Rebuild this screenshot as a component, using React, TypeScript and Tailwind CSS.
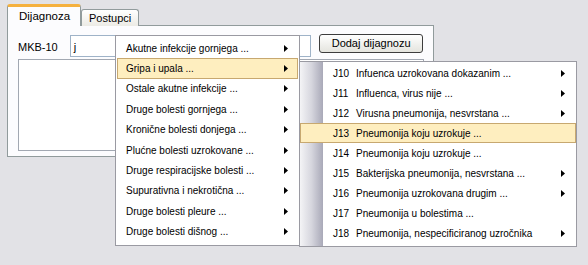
import React from "react";

const groups = [
  "Akutne infekcije gornjega ...",
  "Gripa i upala ...",
  "Ostale akutne infekcije ...",
  "Druge bolesti gornjega ...",
  "Kronične bolesti donjega ...",
  "Plućne bolesti uzrokovane ...",
  "Druge respiracijske bolesti ...",
  "Supurativna i nekrotična ...",
  "Druge bolesti pleure ...",
  "Druge bolesti dišnog ...",
];

const codes = [
  { code: "J10", name: "Infuenca uzrokovana dokazanim ...", sub: true },
  { code: "J11", name: "Influenca, virus nije ...", sub: true },
  { code: "J12", name: "Virusna pneumonija, nesvrstana ...", sub: true },
  { code: "J13", name: "Pneumonija koju uzrokuje ...", sub: false },
  { code: "J14", name: "Pneumonija koju uzrokuje ...", sub: false },
  { code: "J15", name: "Bakterijska pneumonija, nesvrstana ...", sub: true },
  { code: "J16", name: "Pneumonija uzrokovana drugim ...", sub: true },
  { code: "J17", name: "Pneumonija u bolestima ...", sub: false },
  { code: "J18", name: "Pneumonija, nespecificiranog uzročnika", sub: true },
];

function Arrow() {
  return (
    <svg width="4" height="7" viewBox="0 0 4 7" className="shrink-0">
      <polygon points="0,0 4,3.5 0,7" fill="#000" />
    </svg>
  );
}

export default function App() {
  return (
    <div className="relative w-[588px] h-[265px] overflow-hidden bg-[#e2e2e6] font-['Liberation_Sans',Arial,sans-serif] text-black">
      <div className="pl-[7px] pt-[4px]">
        {/* tabs */}
        <div className="relative z-10 -mb-px flex items-end">
          <div className="flex h-[22px] w-[74px] items-center rounded-t-[3px] border-x border-t-[3px] border-x-[#919b9c] border-t-[#f5b13f] bg-[#fcfcfe] pl-[11px] pt-[1px] text-[11.5px]">
            Dijagnoza
          </div>
          <div className="flex h-[17px] w-[58px] items-center rounded-t-[3px] border-x border-t border-[#919b9c] bg-gradient-to-b from-white to-[#ecebe5] pl-[7px] text-[11px]">
            Postupci
          </div>
        </div>

        {/* panel */}
        <div className="h-[132px] w-[427px] border border-[#919b9c] bg-[#fcfcfe] px-[10px] pt-[8px]">
          <div className="flex items-start">
            <span className="mt-[5px] w-[52px] text-[11px]">MKB-10</span>
            <div className="mt-[1px] h-[22px] w-[46px] border border-[#9fb3c8] bg-white pl-[3px] pt-[3px] text-[11px]">
              j
            </div>
            <div className="ml-[6px] mt-[1px] h-[22px] w-[190px] border border-[#9fb3c8] bg-white" />
            <button className="ml-[8px] h-[19px] w-[104px] rounded-[3px] border border-[#3d3d3d] bg-gradient-to-b from-white to-[#e4e4de] text-[11px] leading-none">
              Dodaj dijagnozu
            </button>
          </div>
          <div className="mt-[2px] h-[92px] w-[406px] border border-[#a2a8b2] bg-white" />
        </div>
      </div>

      {/* first-level menu */}
      <div className="absolute left-[115px] top-[35px] w-[185px] border border-[#9a9aa2] bg-white pb-[3px] pt-[2px] text-[10px]">
        {groups.map((g, i) => (
          <div
            key={g}
            className={
              i === 1
                ? "mx-px flex h-[20.4px] items-center justify-between border border-[#c7a870] bg-[#feeebf] pl-[8px] pr-[9px]"
                : "mx-px flex h-[20.4px] items-center justify-between border border-transparent pl-[8px] pr-[9px]"
            }
          >
            <span>{g}</span>
            <Arrow />
          </div>
        ))}
      </div>

      {/* second-level menu */}
      <div className="absolute left-[299px] top-[61px] w-[278px] border border-[#9a9aa2] bg-white pb-[3px] pt-[1px] text-[10px]">
        <div className="absolute bottom-0 left-0 top-0 w-[23px] bg-gradient-to-r from-[#f4f4f6] via-[#d6d6de] to-[#a9a9b8]" />
        {codes.map((c) => (
          <div
            key={c.code}
            className={
              c.code === "J13"
                ? "relative flex h-[20px] items-center border border-[#c7a870] bg-[#feeebf] pl-[32px] pr-[10px]"
                : "relative ml-[23px] flex h-[20px] items-center border border-transparent pl-[9px] pr-[10px]"
            }
          >
            <span className="w-[23px]">{c.code}</span>
            <span className="flex-1">{c.name}</span>
            {c.sub && <Arrow />}
          </div>
        ))}
      </div>
    </div>
  );
}
